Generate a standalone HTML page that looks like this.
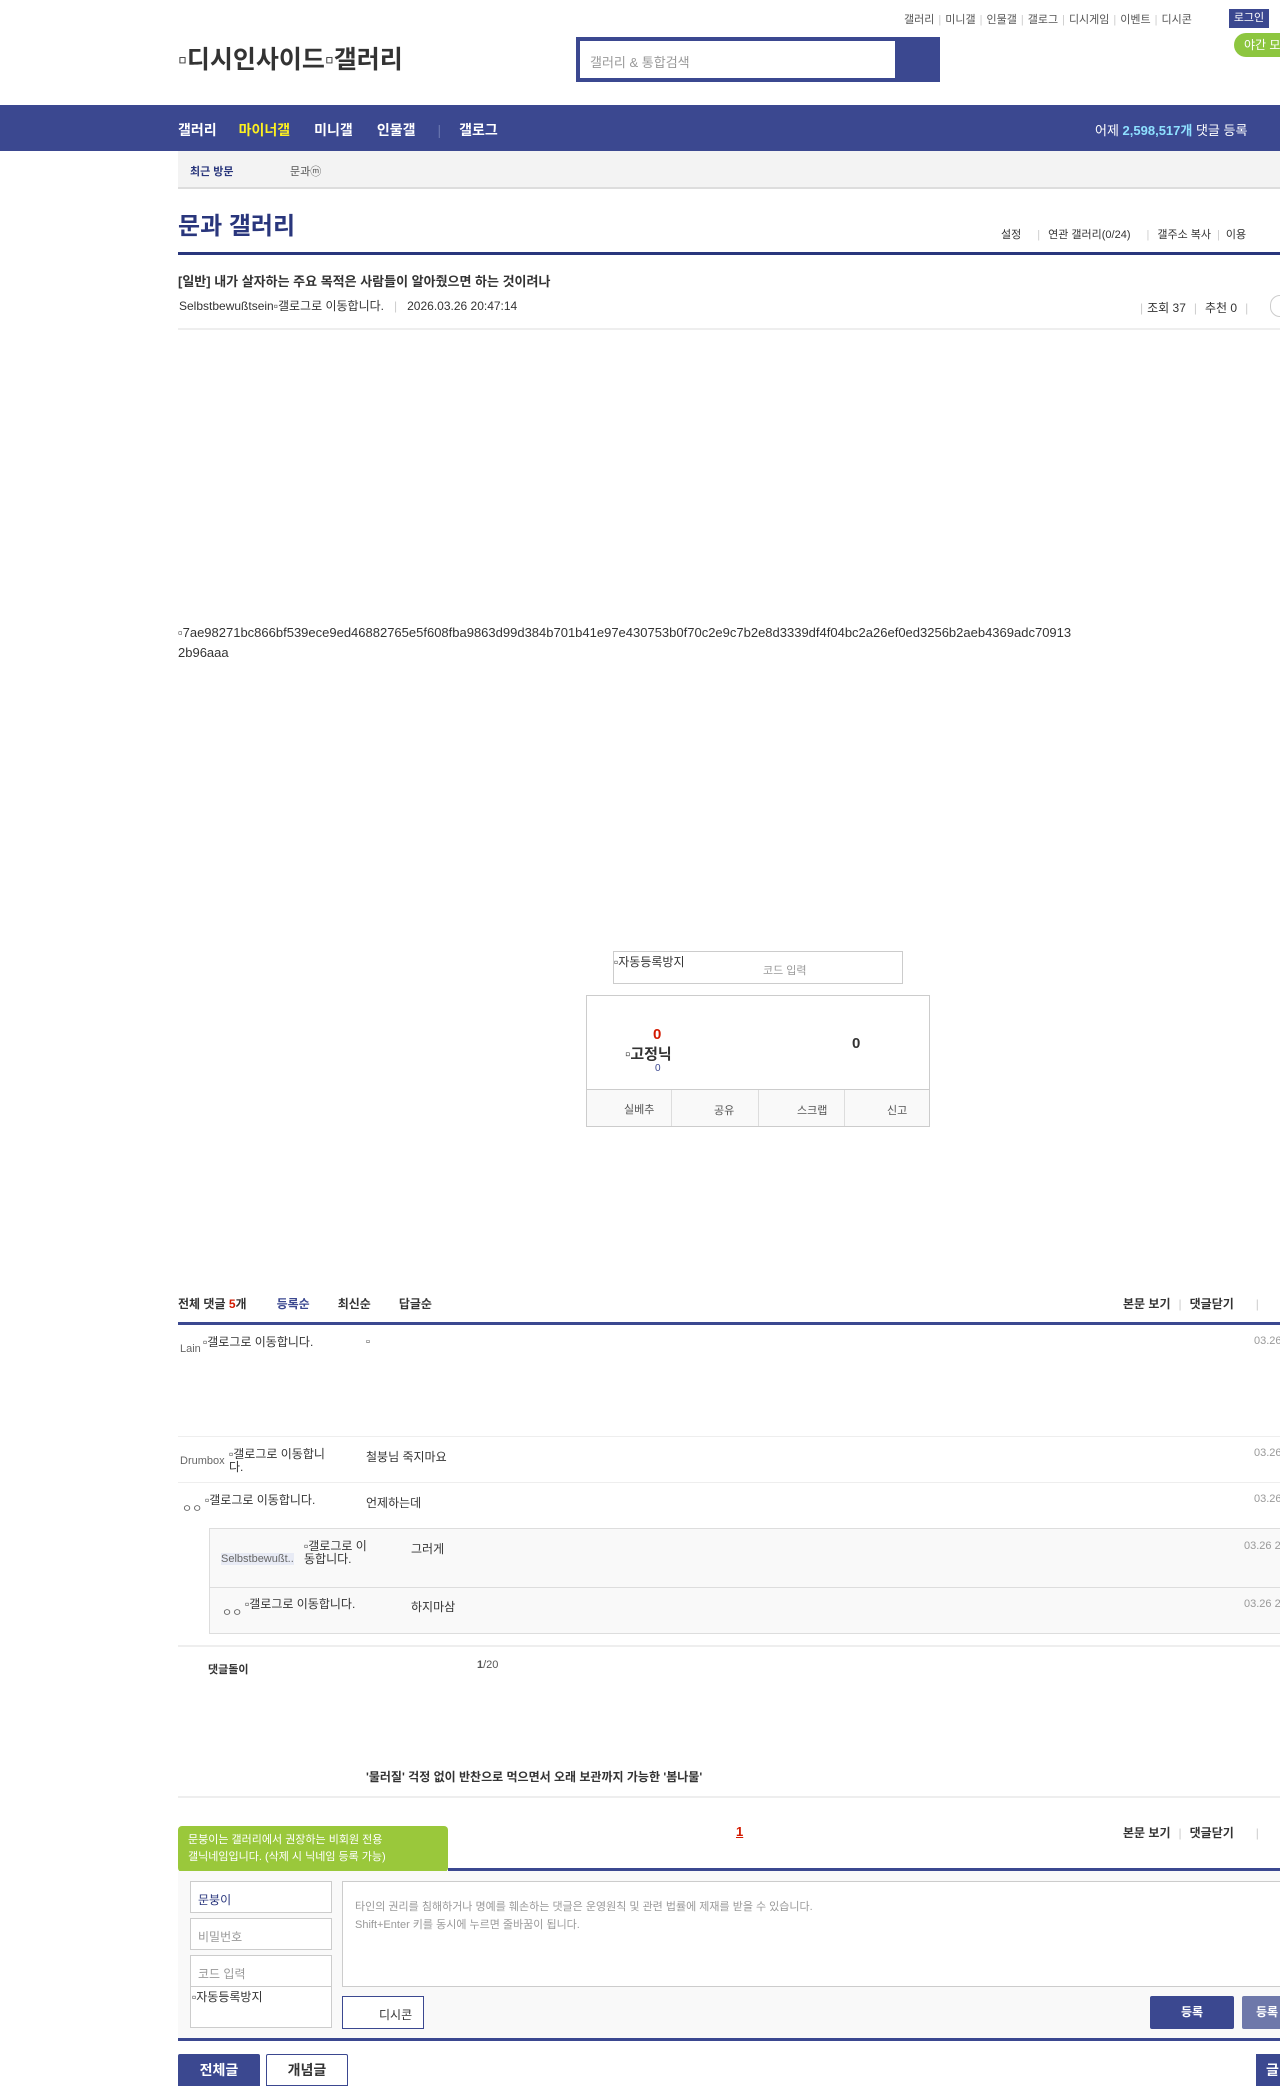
<!DOCTYPE html>
<html><head><meta charset="utf-8"><style>
*{margin:0;padding:0;box-sizing:border-box}
body{width:1280px;height:2083px;overflow:hidden;background:#fff;font-family:"Liberation Sans","Noto Sans CJK KR",sans-serif;color:#333;position:relative;font-size:12px}
.a{position:absolute;white-space:nowrap}
.sep{color:#ccc;margin:0 4px}
.navy{background:#3b4890}
.w{white-space:normal;line-height:13px}
</style></head><body>
<div class="a" style="top:11px;left:904px;font-size:11px;color:#555">갤러리<span class="sep">|</span>미니갤<span class="sep">|</span>인물갤<span class="sep">|</span>갤로그<span class="sep">|</span>디시게임<span class="sep">|</span>이벤트<span class="sep">|</span>디시콘</div>
<div class="a navy" style="top:9px;left:1229px;width:40px;height:19px;color:#fff;font-size:11px;text-align:center;line-height:19px">로그인</div>
<div class="a" style="top:40px;left:178px;font-size:25px;font-weight:bold;color:#333">▫디시인사이드▫갤러리</div>
<div class="a" style="top:37px;left:576px;width:364px;height:45px;background:#3b4890"></div>
<div class="a" style="top:41px;left:580px;width:315px;height:37px;background:#fff;padding:11px 10px;font-size:13px;color:#999">갤러리 &amp; 통합검색</div>
<div class="a" style="top:33px;left:1234px;width:60px;height:24px;background:#8dc63f;border-radius:12px;color:#fff;font-size:12px;line-height:24px;padding-left:10px">야간 모드</div>
<div class="a navy" style="top:105px;left:0;width:1280px;height:46px"></div>
<div class="a" style="top:120px;left:178px;font-size:14px;font-weight:bold;color:#fff">갤러리<span style="color:#fef11f;margin-left:22px">마이너갤</span><span style="margin-left:24px">미니갤</span><span style="margin-left:24px">인물갤</span><span style="color:#6a76b0;margin:0 18px 0 22px;font-weight:normal">|</span>갤로그</div>
<div class="a" style="top:120px;left:1095px;font-size:13px;color:#fff">어제 <b style="color:#8ee0ff">2,598,517개</b> 댓글 등록</div>
<div class="a" style="top:151px;left:178px;width:1102px;height:38px;background:#f3f3f3;border-bottom:2px solid #ddd"></div>
<div class="a" style="top:163px;left:190px;font-size:11px;font-weight:bold;color:#29367c">최근 방문</div>
<div class="a" style="top:163px;left:290px;font-size:11px;color:#555">문과ⓜ</div>
<div class="a" style="top:206px;left:178px;font-size:24px;font-weight:bold;color:#29367c">문과 갤러리</div>
<div class="a" style="top:226px;left:1001px;font-size:11px;color:#333">설정<span class="sep" style="margin:0 8px 0 16px">|</span>연관 갤러리(0/24)<span class="sep" style="margin:0 8px 0 16px">|</span>갤주소 복사<span class="sep" style="margin:0 6px">|</span>이용</div>
<div class="a" style="top:252px;left:178px;width:1102px;height:3px;background:#29367c"></div>
<div class="a" style="top:271px;left:178px;font-size:13px;font-weight:bold;color:#333">[일반] 내가 살자하는 주요 목적은 사람들이 알아줬으면 하는 것이려나</div>
<div class="a" style="top:297px;left:179px;font-size:12px;color:#333">Selbstbewußtsein▫갤로그로 이동합니다.<span class="sep" style="margin:0 10px">|</span>2026.03.26 20:47:14</div>
<div class="a" style="top:299px;left:1136px;font-size:12px;color:#333"><span class="sep">|</span>조회 37<span class="sep" style="margin:0 8px">|</span>추천 0<span class="sep" style="margin:0 8px">|</span></div>
<div class="a" style="top:295px;left:1270px;width:20px;height:22px;border:1px solid #ccc;border-radius:11px"></div>
<div class="a" style="top:328px;left:178px;width:1102px;height:2px;background:#eee"></div>
<div class="a" style="top:623px;left:178px;font-size:13px;color:#333;line-height:20px;white-space:normal;width:900px;word-break:break-all">▫7ae98271bc866bf539ece9ed46882765e5f608fba9863d99d384b701b41e97e430753b0f70c2e9c7b2e8d3339df4f04bc2a26ef0ed3256b2aeb4369adc709132b96aaa</div>
<div class="a" style="top:951px;left:613px;width:290px;height:33px;border:1px solid #ccc"></div>
<div class="a" style="top:953px;left:614px;font-size:12px;color:#333">▫자동등록방지</div>
<div class="a" style="top:962px;left:763px;font-size:11px;color:#999">코드 입력</div>
<div class="a" style="top:995px;left:586px;width:344px;height:132px;border:1px solid #ccc"></div>
<div class="a" style="top:1089px;left:587px;width:342px;height:37px;background:#f9f9f9;border-top:1px solid #ccc"></div>
<div class="a" style="top:1090px;left:671px;width:1px;height:36px;background:#ddd"></div>
<div class="a" style="top:1090px;left:758px;width:1px;height:36px;background:#ddd"></div>
<div class="a" style="top:1090px;left:844px;width:1px;height:36px;background:#ddd"></div>
<div class="a" style="top:1101px;left:624px;font-size:11px;color:#555">실베추</div>
<div class="a" style="top:1102px;left:714px;font-size:11px;color:#555">공유</div>
<div class="a" style="top:1102px;left:797px;font-size:11px;color:#555">스크랩</div>
<div class="a" style="top:1102px;left:887px;font-size:11px;color:#555">신고</div>
<div class="a" style="top:1026px;left:653px;font-size:15px;font-weight:bold;color:#d31900">0</div>
<div class="a" style="top:1043px;left:625px;font-size:15px;font-weight:bold;color:#333">▫고정닉</div>
<div class="a" style="top:1063px;left:655px;font-size:10px;color:#3b4890">0</div>
<div class="a" style="top:1035px;left:852px;font-size:15px;font-weight:bold;color:#333">0</div>
<div class="a" style="top:1295px;left:178px;font-size:12px;font-weight:bold;color:#333">전체 댓글 <span style="color:#d31900">5</span>개<span style="color:#3b4890;margin-left:30px">등록순</span><span style="margin-left:28px">최신순</span><span style="margin-left:28px">답글순</span></div>
<div class="a" style="top:1295px;left:1123px;font-size:12px;font-weight:bold;color:#333">본문 보기<span class="sep" style="font-weight:normal;margin:0 8px">|</span>댓글닫기<span class="sep" style="margin-left:22px;font-weight:normal">|</span></div>
<div class="a" style="top:1322px;left:178px;width:1102px;height:3px;background:#3b4890"></div>
<div class="a" style="top:1343px;left:180px;font-size:11px;color:#666">Lain</div>
<div class="a w" style="top:1336px;left:203px;font-size:12px;color:#333;width:128px">▫갤로그로 이동합니다.</div>
<div class="a" style="top:1336px;left:366px;font-size:11px;color:#333">▫</div>
<div class="a" style="top:1335px;left:1254px;font-size:11px;color:#999">03.26</div>
<div class="a" style="top:1436px;left:178px;width:1102px;height:1px;background:#eee"></div>
<div class="a" style="top:1455px;left:180px;font-size:11px;color:#666">Drumbox</div>
<div class="a w" style="top:1448px;left:229px;font-size:12px;color:#333;width:102px">▫갤로그로 이동합니다.</div>
<div class="a" style="top:1448px;left:366px;font-size:12px;color:#333">철붕님 죽지마요</div>
<div class="a" style="top:1447px;left:1254px;font-size:11px;color:#999">03.26</div>
<div class="a" style="top:1482px;left:178px;width:1102px;height:1px;background:#eee"></div>
<div class="a" style="top:1500px;left:182px;font-size:11px;color:#666">ㅇㅇ</div>
<div class="a w" style="top:1494px;left:205px;font-size:12px;color:#333;width:126px">▫갤로그로 이동합니다.</div>
<div class="a" style="top:1494px;left:366px;font-size:12px;color:#333">언제하는데</div>
<div class="a" style="top:1493px;left:1254px;font-size:11px;color:#999">03.26</div>
<div class="a" style="top:1528px;left:209px;width:1071px;height:106px;background:#f9f9f9;border:1px solid #ddd;border-right:none"></div>
<div class="a" style="top:1587px;left:209px;width:1071px;height:1px;background:#ddd"></div>
<div class="a" style="top:1553px;left:221px;font-size:11px;color:#666;background:#e8ebf5">Selbstbewußt..</div>
<div class="a w" style="top:1540px;left:304px;font-size:12px;color:#333;width:72px">▫갤로그로 이동합니다.</div>
<div class="a" style="top:1540px;left:411px;font-size:12px;color:#333">그러게</div>
<div class="a" style="top:1540px;left:1244px;font-size:11px;color:#999">03.26 2</div>
<div class="a" style="top:1604px;left:222px;font-size:11px;color:#666">ㅇㅇ</div>
<div class="a w" style="top:1598px;left:245px;font-size:12px;color:#333;width:126px">▫갤로그로 이동합니다.</div>
<div class="a" style="top:1598px;left:411px;font-size:12px;color:#333">하지마삼</div>
<div class="a" style="top:1598px;left:1244px;font-size:11px;color:#999">03.26 2</div>
<div class="a" style="top:1645px;left:178px;width:1102px;height:2px;background:#eee"></div>
<div class="a" style="top:1661px;left:208px;font-size:11px;font-weight:bold;color:#333">댓글돌이</div>
<div class="a" style="top:1659px;left:477px;font-size:11px;color:#555"><b>1</b>/20</div>
<div class="a" style="top:1768px;left:366px;font-size:12px;font-weight:bold;color:#333">'물러질' 걱정 없이 반찬으로 먹으면서 오래 보관까지 가능한 '봄나물'</div>
<div class="a" style="top:1796px;left:178px;width:1102px;height:2px;background:#eee"></div>
<div class="a" style="top:1826px;left:178px;width:270px;height:46px;background:#9ac83b;border-radius:4px;color:#fff;font-size:11px;line-height:17px;padding:6px 10px">문붕이는 갤러리에서 권장하는 비회원 전용<br>갤닉네임입니다. (삭제 시 닉네임 등록 가능)</div>
<div class="a" style="top:1872px;left:211px;width:0;height:0;border-left:5px solid transparent;border-right:5px solid transparent;border-top:7px solid #9ac83b"></div>
<div class="a" style="top:1824px;left:736px;font-size:13px;font-weight:bold;color:#d31900;text-decoration:underline">1</div>
<div class="a" style="top:1824px;left:1123px;font-size:12px;font-weight:bold;color:#333">본문 보기<span class="sep" style="font-weight:normal;margin:0 8px">|</span>댓글닫기<span class="sep" style="margin-left:22px;font-weight:normal">|</span></div>
<div class="a" style="top:1868px;left:448px;width:832px;height:3px;background:#3b4890"></div>
<div class="a" style="top:1871px;left:178px;width:1102px;height:167px;background:#f9f9f9"></div>
<div class="a" style="top:1881px;left:190px;width:142px;height:32px;background:#fff;border:1px solid #ccc;font-size:12px;color:#29367c;padding:9px 7px">문붕이</div>
<div class="a" style="top:1918px;left:190px;width:142px;height:32px;background:#fff;border:1px solid #ccc;font-size:12px;color:#999;padding:9px 7px">비밀번호</div>
<div class="a" style="top:1955px;left:190px;width:142px;height:32px;background:#fff;border:1px solid #ccc;font-size:12px;color:#999;padding:9px 7px">코드 입력</div>
<div class="a" style="top:1986px;left:190px;width:142px;height:42px;background:#fff;border:1px solid #ccc;font-size:12px;color:#333;padding:1px 1px">▫자동등록방지</div>
<div class="a" style="top:1881px;left:342px;width:938px;height:106px;background:#fff;border:1px solid #ccc;border-right:none;font-size:11px;color:#999;padding:16px 12px;line-height:18px;white-space:normal">타인의 권리를 침해하거나 명예를 훼손하는 댓글은 운영원칙 및 관련 법률에 제재를 받을 수 있습니다.<br>Shift+Enter 키를 동시에 누르면 줄바꿈이 됩니다.</div>
<div class="a" style="top:1996px;left:342px;width:82px;height:33px;background:#fff;border:1px solid #3b4890;font-size:12px;color:#333;padding:9px 0 0 36px">디시콘</div>
<div class="a navy" style="top:1996px;left:1150px;width:84px;height:33px;color:#fff;font-size:12px;font-weight:bold;text-align:center;line-height:33px;border-radius:2px">등록</div>
<div class="a" style="top:1996px;left:1242px;width:60px;height:33px;background:#6e78aa;color:#fff;font-size:12px;font-weight:bold;line-height:33px;padding-left:14px;border-radius:2px">등록</div>
<div class="a" style="top:2038px;left:178px;width:1102px;height:3px;background:#3b4890"></div>
<div class="a navy" style="top:2054px;left:178px;width:82px;height:32px;color:#fff;font-size:14px;font-weight:bold;text-align:center;line-height:32px;border-radius:2px 2px 0 0">전체글</div>
<div class="a" style="top:2054px;left:266px;width:82px;height:32px;border:1px solid #3b4890;color:#333;font-size:14px;font-weight:bold;text-align:center;line-height:30px;border-radius:2px 2px 0 0">개념글</div>
<div class="a navy" style="top:2054px;left:1256px;width:40px;height:32px;color:#fff;font-size:14px;font-weight:bold;line-height:32px;padding-left:10px">글</div>
</body></html>
